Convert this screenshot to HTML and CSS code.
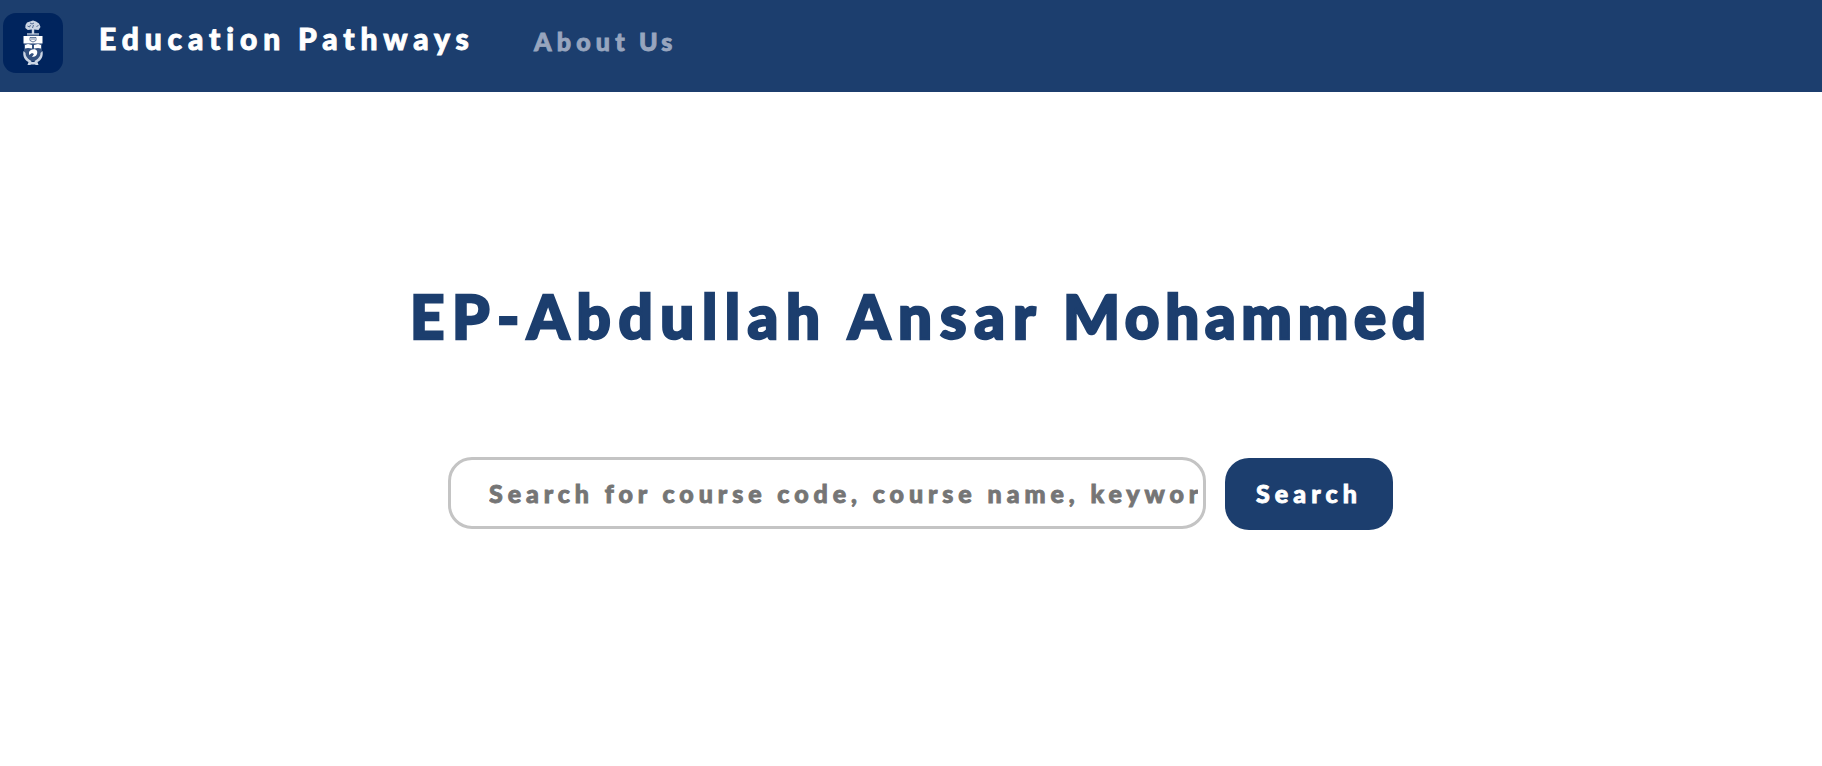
FILE: index.html
```html
<!DOCTYPE html>
<html lang="en">
<head>
<meta charset="utf-8">
<title>Education Pathways</title>
<link rel="stylesheet" href="styles.css">
</head>
<body>
<header class="navbar">
  <svg class="logo" viewBox="0 0 60 60" aria-label="University crest">
    <rect width="60" height="60" rx="13" fill="#00245d"/>
    <g fill="#cbd5e4">
      <path d="M28.800 21V16.500l-4 .5-2.500-2 .2-3 1.500-2.500 3-1 3-1 3 1 3 2 1.500 3.500-2 3-4.300-.5v4.500z"/>
      <path d="M24 20h12v2.500H24z" opacity=".65"/>
      <path d="M20.500 23h19v7.500h-19z" fill="#fff"/>
      <path d="M21 30.500h18v8c0 5-5 8-9 10-4-2-9-5-9-10z" opacity=".25"/>
      <path d="M22 32l3-1 4 1v3.500l-4-.5-3 .5zM31 32l4-1 3 1v3.500l-3-.5-4 .5z" fill="#fff"/>
      <path d="M26 39c1-3 7-4 8-1 1 3-1 6-5 6l2-3-2-1-3 2z" fill="#fff"/>
      <path d="M20.500 38l2 2c0 4 3 6 6 8l-1 4h-3l1-3c-4-2-6-6-5-11zM39.500 38l-2 2c0 4-3 6-6 8l1 4h3l-1-3c4-2 6-6 5-11z"/>
      <path d="M26 49h8v2.500h-8z"/>
    </g>
    <g fill="none" stroke="#00245d" stroke-width=".6">
      <path d="M24.500 13l2 1 1-2m2 3 1-3m3 2 2-2M27 10l2 1 2-1"/>
      <path d="M27 24.500h6v3l-3 1.500-3-1.500zM28 26h4"/>
    </g>
  </svg>
  <a class="brand"><span class="w-education">Education</span><span class="w-pathways">Pathways</span></a>
  <a class="about"><span class="w-about">About</span><span class="w-us">Us</span></a>
</header>
<main>
  <h1 class="title"><span class="w-first">EP-Abdullah</span><span class="w-second">Ansar</span><span class="w-third">Mohammed</span></h1>
  <form class="search">
    <input class="search-input" type="text" placeholder="Search for course code, course name, keyword ...">
    <button class="search-button" type="button">Search</button>
  </form>
</main>
</body>
</html>
```
FILE: styles.css
```css
* { box-sizing: border-box; }
body { margin: 0; background: #fff; font-family: Lato, "Open Sans", sans-serif; font-weight: 900; overflow: hidden; -webkit-text-stroke: 0.9px currentColor; }
.navbar { height: 92px; background: #1c3e6e; display: flex; align-items: flex-start; padding: 13px 0 0 3px; }
.logo { width: 60px; height: 60px; flex: none; }
.brand { display: flex; margin: 7px 0 0 36px; font-size: 30px; line-height: 36px; color: #fff; }
.about { display: flex; margin: 13px 0 0 63px; font-size: 25px; line-height: 30px; color: #97a5be; }
.brand span, .about span { white-space: nowrap; flex: none; }
.w-education { width: 199px; letter-spacing: 5.900px; }
.w-pathways { width: 173px; letter-spacing: 5.900px; }
.w-about { width: 105px; letter-spacing: 5.200px; }
.w-us { width: 36px; letter-spacing: 4px; }
.title { display: flex; margin: 187px 0 0 410px; font-size: 60px; line-height: 74px; font-weight: 900; color: #1c3e6e; -webkit-text-stroke: 2.400px currentColor; }
.title span { flex: none; white-space: nowrap; }
.w-first { width: 438px; letter-spacing: 7.600px; }
.w-second { width: 215px; letter-spacing: 7.900px; }
.w-third { letter-spacing: 5.700px; }
.search { display: flex; margin: 104px 0 0 448px; gap: 19px; }
.search-input { width: 758px; height: 72px; padding: 0 5px 1px 38px; border: 3px solid #c4c4c4; border-radius: 24px; background: #fff; font: inherit; font-size: 25px; letter-spacing: 4.930px; }
.search-input::placeholder { color: #757575; opacity: 1; -webkit-text-stroke: 0.9px #757575; }
.search-button { width: 168px; height: 72px; margin-top: 1px; padding: 0 0 3px 31px; border: 0; border-radius: 24px; background: #1c3e6e; color: #fff; text-align: left; font: inherit; font-size: 25px; letter-spacing: 5.100px; -webkit-text-stroke: 0.9px #fff; }
```
